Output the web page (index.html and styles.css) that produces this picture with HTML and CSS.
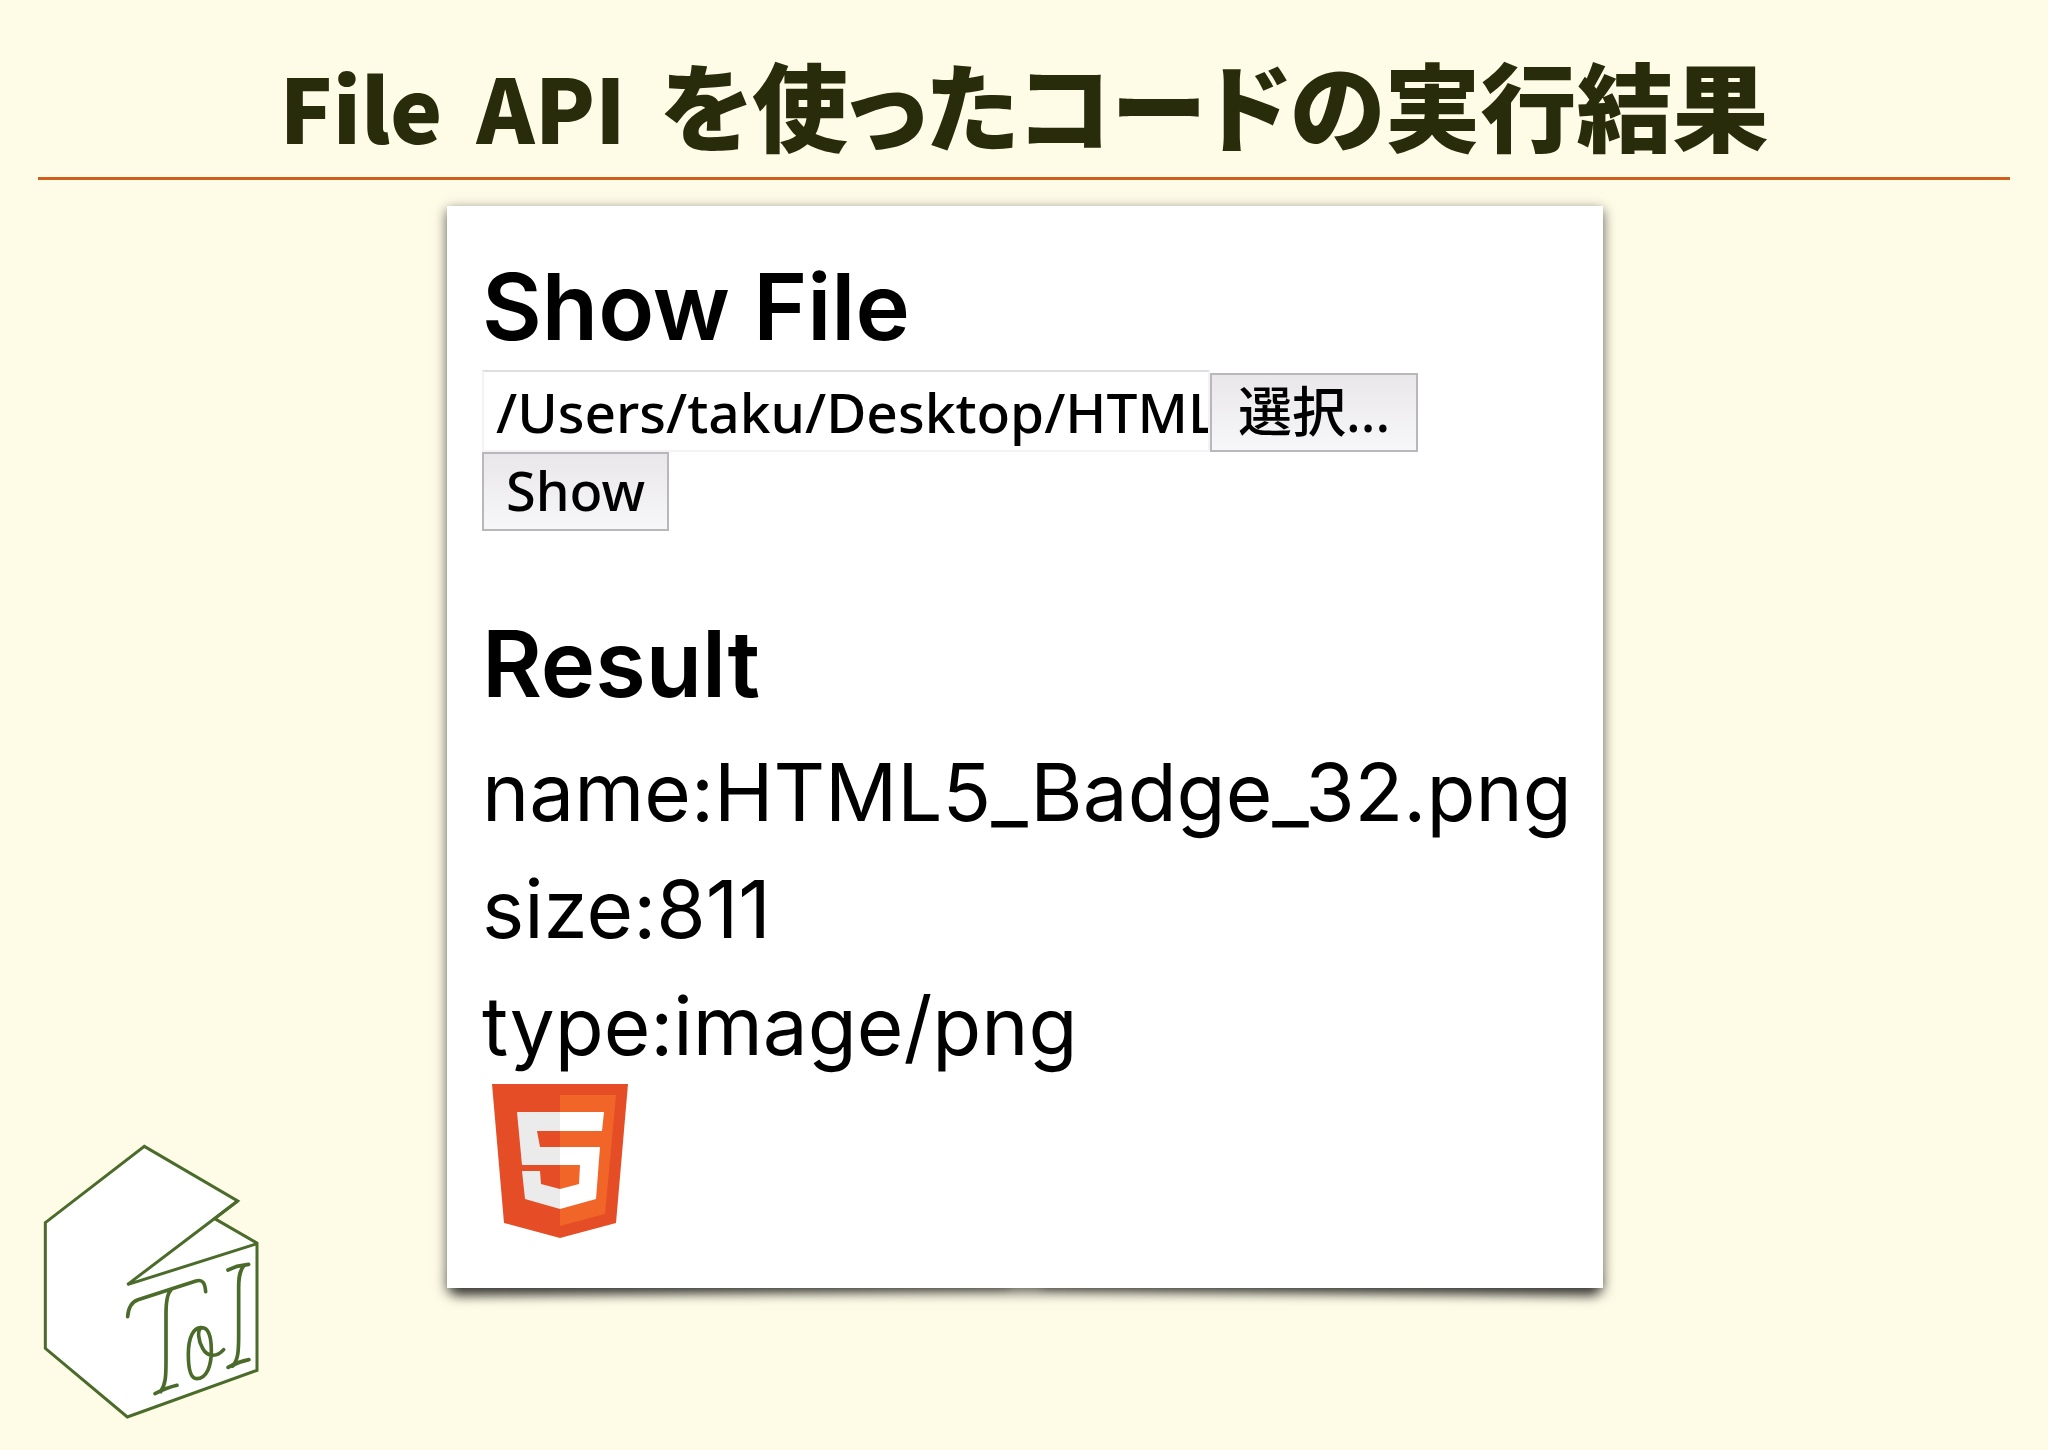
FILE: index.html
```html
<!DOCTYPE html>
<html lang="ja">
  <head>
    <title>File API を使ったコードの実行結果</title>
    <meta charset="utf-8" />
    <meta name="viewport" content="width=device-width, initial-scale=1.0" />
    <link rel="stylesheet" href="styles.css">
  </head>
  <body>
    <header class="title">
      <h1><span class="latin">File</span> <span class="latin">API</span> を使ったコードの実行結果</h1>
    </header>
    <main class="slide">
      <svg class="logo" viewBox="66 66 654 832" role="img" aria-label="ToI">
        <g fill="#fff" stroke="#4a6b2a" stroke-width="9">
          <path d="M584 293 L711 366 V748 L322 888 L76 682 V305 L373 76 L653 240 Z" />
          <path d="M653 240 L322 491 L711 368" fill="none" />
        </g>
        <g fill="none" stroke="#4a6b2a" stroke-width="11" stroke-linecap="round">
          <path d="M323 587 C325 560 333 543 354 536 L528 480 C548 474 555 486 557 512" />
          <path d="M452 508 C440 520 438 545 438 580 V720 C438 765 437 790 422 812" />
          <path d="M405 818 Q440 800 471 793" />
          <path d="M545 620 C520 618 505 650 505 700 C505 745 512 773 530 773 C560 773 574 735 574 690 C574 645 565 620 545 620 C530 625 535 660 548 682 C562 708 590 710 611 686" />
          <path d="M624 447 L651 436 L686 430" />
          <path d="M672 434 C658 450 656 470 656 500 V640 C656 690 655 715 638 735" />
          <path d="M624 739 Q655 722 687 716" />
        </g>
      </svg>
      <section class="panel">
        <h2>Show File</h2>
        <form class="file-form">
          <div class="file-row">
            <input type="text" class="path" aria-label="File" value="/Users/taku/Desktop/HTML5_Badge_32.png" />
            <button type="button" class="browse">選択...</button>
          </div>
          <button type="button">Show</button>
        </form>
        <h2>Result</h2>
        <div class="result">
          <p>name:HTML5_Badge_32.png</p>
          <p>size:811</p>
          <p>type:image/png</p>
          <svg class="badge" viewBox="0 0 136 154" role="img" aria-label="HTML5">
            <path fill="#e44d26" d="M0 0 H136 L124 139 L68 154 L12 139 Z" />
            <path fill="#f16529" d="M68 11 H124 L113 130 L68 142 Z" />
            <path fill="#ebebeb" d="M68 28 H25 L30 81 H68 V63 H48 L45 47 H68 Z M68 105 L49 100 L48 87 H30 L33 115 L68 125 Z" />
            <path fill="#fff" d="M68 28 H112 L110 47 H68 Z M68 63 H108 L104 115 L68 125 V105 L87 100 L88 81 H68 Z" />
          </svg>
        </div>
      </section>
    </main>
  </body>
</html>
```

FILE: styles.css
```css
* {
  box-sizing: border-box;
}
body {
  margin: 0;
  min-height: 100vh;
  display: flex;
  flex-direction: column;
  background-color: #fefbe7;
  color: #000;
  font-family: Inter, 'Noto Sans CJK JP', sans-serif;
}
.title {
  margin: 0 38px;
  padding: 32px 0 0;
  border-bottom: 3px solid #cf5f1c;
}
h1 {
  margin: 0;
  font-family: 'Noto Sans CJK JP', sans-serif;
  font-size: 96px;
  font-weight: 900;
  line-height: 142px;
  font-feature-settings: 'palt';
  text-align: center;
  color: #282c0a;
}
h1 .latin {
  margin-right: 12px;
  font-size: 88px;
}
.slide {
  flex: 1;
  display: grid;
  grid-template-columns: 1fr minmax(0, 1156px) 1fr;
  padding: 26px 38px 30px 40px;
  isolation: isolate;
}
.logo {
  width: 218px;
  margin-left: 2px;
  align-self: end;
}
.panel {
  position: relative;
  align-self: start;
  padding: 43px 0 50px 35px;
  background-color: #fff;
  box-shadow: 0 4px 12px rgba(0, 0, 0, 0.65);
}
/* lifted corners */
.panel::before,
.panel::after {
  content: '';
  position: absolute;
  z-index: -1;
  bottom: 8px;
  width: 48%;
  height: 20px;
  box-shadow: 0 11px 12px rgba(0, 0, 0, 0.5);
}
.panel::before {
  left: 6px;
  transform: rotate(-1deg);
}
.panel::after {
  right: 6px;
  transform: rotate(1deg);
}
h2 {
  margin: 0 0 5px;
  font-size: 92px;
  font-weight: 600;
  line-height: 116px;
}
.result {
  padding-top: 6px;
}
p {
  margin: 0;
  font-size: 80px;
  line-height: 117px;
}
.file-form {
  margin-bottom: 75px;
}
.file-row {
  display: flex;
  align-items: flex-end;
}
.path {
  width: 728px;
  height: 82px;
  padding: 0 0 0 12px;
  border: 2px solid #f4f2f4;
  border-top-color: #e0dee2;
  background-color: #fff;
}
.path,
button {
  color: #000;
  font-family: 'Noto Sans', 'Noto Sans CJK JP', sans-serif;
  font-size: 54px;
  font-weight: 500;
}
.path {
  font-size: 55px;
}
button {
  height: 79px;
  padding: 0 22px 4px;
  border: 2px solid #b9b7bb;
  background: linear-gradient(#e9e7ea, #f7f6f8);
  line-height: 70px;
}
.browse {
  padding: 0 26px 4px;
}
.badge {
  display: block;
  width: 136px;
  margin: 0 0 0 10px;
}
```
